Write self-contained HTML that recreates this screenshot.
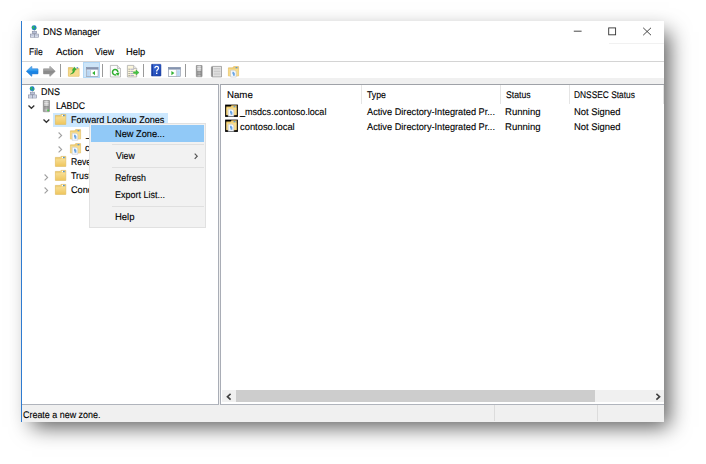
<!DOCTYPE html>
<html lang="en"><head><meta charset="utf-8"><title>DNS Manager</title>
<style>
html,body{margin:0;padding:0}
body{width:706px;height:464px;background:#fff;position:relative;overflow:hidden;font-family:"Liberation Sans",sans-serif;font-size:9.7px;color:#000;-webkit-text-stroke:.12px #000}
.a{position:absolute}
.t{position:absolute;white-space:pre;line-height:12px;height:12px;transform-origin:0 50%}
#win{position:absolute;left:21px;top:21px;width:643px;height:400.8px;background:#fff;box-shadow:8px 7.5px 20px -3px rgba(0,0,0,.65)}
svg{position:absolute;overflow:visible}
</style></head>
<body>
<div id="win"></div>
<!-- blue active-window edge -->
<div class="a" style="left:21px;top:21px;width:1.4px;height:400.8px;background:#2e7bd0"></div>
<!-- caption buttons -->
<svg style="left:570px;top:24px" width="90" height="16" viewBox="0 0 90 16">
 <path d="M3.8 7.2H11.6" stroke="#333" stroke-width="0.9" fill="none"/>
 <rect x="38.7" y="3.9" width="6.9" height="6.9" stroke="#333" stroke-width="0.9" fill="none"/>
 <path d="M73.2 3.8L81 11.2M81 3.8L73.2 11.2" stroke="#333" stroke-width="0.9" fill="none"/>
</svg>
<div class="a" style="left:609px;top:43.4px;width:55px;height:1px;background:#f1f1f1"></div>
<!-- toolbar -->
<div class="a" style="left:22px;top:61px;width:642px;height:1px;background:#d4d4d4"></div>
<div class="a" style="left:22px;top:78px;width:642px;height:6px;background:#f0f0f0"></div>
<!-- panes -->
<div class="a" style="left:22px;top:84px;width:197.2px;height:320.6px;background:#fff;border-top:1.1px solid #9fa2a8;border-right:1.2px solid #a9adb6;border-bottom:1.4px solid #b0b4bc;box-sizing:border-box"></div>
<div class="a" style="left:219.2px;top:84px;width:1.2px;height:320.6px;background:#f0f0f0"></div>
<div class="a" style="left:220.4px;top:84px;width:443.6px;height:320.6px;background:#fff;border-top:1.1px solid #9fa2a8;border-left:1.2px solid #a9adb6;border-bottom:1.4px solid #b0b4bc;box-sizing:border-box"></div>
<!-- tree selection -->
<div class="a" style="left:53px;top:113.3px;width:114.6px;height:13.4px;background:#cce8ff"></div>
<!-- list header separators -->
<div class="a" style="left:361px;top:85px;width:1px;height:18.5px;background:#e5e5e5"></div>
<div class="a" style="left:500px;top:85px;width:1px;height:18.5px;background:#e5e5e5"></div>
<div class="a" style="left:569px;top:85px;width:1px;height:18.5px;background:#e5e5e5"></div>
<div class="a" style="left:662.6px;top:85px;width:1px;height:18.5px;background:#e5e5e5"></div>
<!-- h scrollbar -->
<div class="a" style="left:221.6px;top:390.2px;width:442.4px;height:12.1px;background:#f0f0f0"></div>
<div class="a" style="left:235.8px;top:390.2px;width:359.6px;height:12.1px;background:#cdcdcd"></div>
<svg style="left:226px;top:392.5px" width="6" height="8" viewBox="0 0 6 8"><path d="M4.6 0.8L1.4 3.7L4.6 6.6" stroke="#404040" stroke-width="1.6" fill="none"/></svg>
<svg style="left:654.5px;top:392.5px" width="6" height="8" viewBox="0 0 6 8"><path d="M1.4 0.8L4.6 3.7L1.4 6.6" stroke="#404040" stroke-width="1.6" fill="none"/></svg>
<!-- status bar -->
<div class="a" style="left:22px;top:404.6px;width:642px;height:17.2px;background:#f0f0f0"></div>
<div class="a" style="left:494.3px;top:405px;width:1px;height:16px;background:#dcdcdc"></div>
<div class="a" style="left:597.3px;top:405px;width:1px;height:16px;background:#dcdcdc"></div>
<svg style="left:30.0px;top:25.1px;filter:blur(0.3px)" width="8.9" height="12.6" viewBox="0 0 8.9 12.6"><circle cx="4.1" cy="2.7" r="2.5" fill="#1f76d3"/><path d="M2.3 1.7Q3.4 0.4 4.7 0.7Q4 1.9 4.4 2.7Q3.2 3.3 3 4.7Q1.9 3.5 2.3 1.7Z" fill="#2fbf4f"/><path d="M5.4 2.3Q6.4 2.5 6.4 3.7Q5.6 4.9 4.8 5.1Q5.4 3.7 5.4 2.3Z" fill="#2fbf4f"/><path d="M4.45 5.3V6.3" stroke="#8a8fa3" stroke-width=".7"/><rect x="2.3" y="6.3" width="4.3" height="2.3" fill="#cfd6e6" stroke="#8a90a6" stroke-width=".7"/><rect x=".4" y="9.1" width="3.9" height="3.1" fill="#e4e9f4" stroke="#8a90a6" stroke-width=".7"/><rect x="4.6" y="9.1" width="3.9" height="3.1" fill="#e4e9f4" stroke="#8a90a6" stroke-width=".7"/><path d="M1.2 10.4H3.5M5.4 10.4H7.7M3 7.4H5.9" stroke="#9aa5c4" stroke-width=".6"/></svg>
<svg style="left:25.5px;top:65.8px;filter:blur(0.3px)" width="12.4" height="10.6" viewBox="0 0 12.4 10.6"><defs><linearGradient id="gb" x1="0" y1="0" x2="0" y2="1"><stop offset="0" stop-color="#6cc0f8"/><stop offset=".45" stop-color="#2b95ec"/><stop offset=".55" stop-color="#1582e4"/><stop offset="1" stop-color="#3a90e0"/></linearGradient></defs><path d="M0.3 5.3L5.4 0.4Q5.9 0.1 5.9 .7V2.7H11.6Q12.1 2.7 12.1 3.2V7.4Q12.1 7.9 11.6 7.9H5.9V9.9Q5.9 10.5 5.4 10.2Z" fill="url(#gb)" stroke="#2877cc" stroke-width=".5" stroke-linejoin="round"/></svg>
<svg style="left:43.0px;top:65.8px;filter:blur(0.3px)" width="12.6" height="10.6" viewBox="0 0 12.6 10.6"><defs><linearGradient id="gf" x1="0" y1="0" x2="0" y2="1"><stop offset="0" stop-color="#c2c2c2"/><stop offset=".45" stop-color="#979797"/><stop offset=".55" stop-color="#868686"/><stop offset="1" stop-color="#a4a4a4"/></linearGradient></defs><path d="M12.3 5.3L7.2 0.4Q6.7 0.1 6.7 .7V2.7H0.8Q0.3 2.7 0.3 3.2V7.4Q0.3 7.9 0.8 7.9H6.7V9.9Q6.7 10.5 7.2 10.2Z" fill="url(#gf)" stroke="#878787" stroke-width=".5" stroke-linejoin="round"/></svg>
<div class="a" style="left:60.1px;top:64.2px;width:1px;height:13.2px;background:#9a9a9a"></div>
<svg style="left:67.8px;top:66.0px;filter:blur(0.3px)" width="11.5" height="10.6" viewBox="0 0 11.5 10.6"><path d="M0.4 1.6H4.6L5.6 2.4H11.1V10.2H0.4Z" fill="#f0cf74" stroke="#d9b154" stroke-width=".6"/><path d="M0.7 3.6H10.8V9.9H0.7Z" fill="#f6dc8e"/><path d="M2.4 8.2Q4.8 7.4 5.4 4.2L4.1 4.4L6.3 0.9L8.3 3.8L7 4Q6.4 7.8 2.4 8.2Z" fill="#35b535" stroke="#2a962a" stroke-width=".4"/><rect x="8.6" y="1.2" width="1.5" height="1.3" fill="#4a90d0"/></svg>
<div class="a" style="left:82.8px;top:62.3px;width:17.5px;height:16.2px;background:#cde5f8;border:1px solid #b2d7f6;box-sizing:border-box"></div>
<svg style="left:85.9px;top:66.7px;filter:blur(0.3px)" width="12.4" height="9.8" viewBox="0 0 12.4 9.8"><rect x=".3" y=".3" width="11.8" height="9.2" fill="#fff" stroke="#7f8ba0" stroke-width=".6"/><rect x=".3" y=".3" width="11.8" height="2.3" fill="#8594b0"/><rect x=".9" y="3.2" width="3" height="5.8" fill="#b9d6f3"/><path d="M4.5 2.8V9.4" stroke="#8e9ab0" stroke-width=".5"/><path d="M6.2 6.1L9 3.9V8.3Z" fill="#33b233"/></svg>
<div class="a" style="left:101.9px;top:64.2px;width:1px;height:13.2px;background:#9a9a9a"></div>
<svg style="left:110.2px;top:64.5px;filter:blur(0.3px)" width="10.9" height="12.4" viewBox="0 0 10.9 12.4"><path d="M.4 .4H7.4L10.5 3.5V12H.4Z" fill="#fdfdfd" stroke="#a6a6a6" stroke-width=".7"/><path d="M7.4 .4V3.5H10.5" fill="#e8e8e8" stroke="#a6a6a6" stroke-width=".6"/><path d="M7.9 7.2A2.7 2.7 0 1 0 6.4 9.6" fill="none" stroke="#2fae2f" stroke-width="1.5"/><path d="M5.6 8.2L9.6 7.6L8.2 11Z" fill="#2fae2f"/></svg>
<svg style="left:126.6px;top:64.5px;filter:blur(0.3px)" width="12.4" height="12.4" viewBox="0 0 12.4 12.4"><path d="M.4 .4H6.6L9.7 3.5V12H.4Z" fill="#fbf6dc" stroke="#a6a6a6" stroke-width=".7"/><path d="M6.6 .4V3.5H9.7" fill="#e8e8e8" stroke="#a6a6a6" stroke-width=".6"/><path d="M1.6 4.2H2.6M1.6 6.4H2.6M1.6 8.6H2.6M1.6 10.6H2.6" stroke="#555" stroke-width=".8"/><path d="M3.4 4.2H7M3.4 6.4H6M3.4 8.6H6M3.4 10.6H7" stroke="#8a8ac0" stroke-width=".7"/><path d="M6.4 6.7H9V5.1L12.1 7.6L9 10.1V8.5H6.4Z" fill="#45c445" stroke="#2fa02f" stroke-width=".4"/></svg>
<div class="a" style="left:143.2px;top:64.2px;width:1px;height:13.2px;background:#9a9a9a"></div>
<svg style="left:151.2px;top:64.4px;filter:blur(0.3px)" width="10.3" height="12.4" viewBox="0 0 10.3 12.4"><defs><linearGradient id="gh" x1="0" y1="0" x2="1" y2="1"><stop offset="0" stop-color="#3b6fe0"/><stop offset="1" stop-color="#1a3fa8"/></linearGradient></defs><rect x=".3" y=".3" width="9.7" height="11.8" rx=".6" fill="url(#gh)" stroke="#20409a" stroke-width=".5"/><path d="M1.4 .4V12" stroke="#16308a" stroke-width=".8"/><path d="M3.9 4.2Q3.9 2.4 5.7 2.4Q7.5 2.4 7.5 4Q7.5 5.1 6.5 5.8Q5.7 6.4 5.7 7.6" fill="none" stroke="#fff" stroke-width="1.3"/><rect x="5" y="8.6" width="1.4" height="1.4" fill="#fff"/></svg>
<svg style="left:168.0px;top:66.5px;filter:blur(0.3px)" width="12.8" height="9.9" viewBox="0 0 12.8 9.9"><rect x=".3" y=".3" width="12.2" height="9.3" fill="#fff" stroke="#7f8ba0" stroke-width=".6"/><rect x=".3" y=".3" width="12.2" height="2.3" fill="#8594b0"/><rect x="9" y="3.2" width="2.9" height="5.8" fill="#b9d6f3"/><path d="M8.4 2.8V9.4" stroke="#8e9ab0" stroke-width=".5"/><path d="M6.4 6.1L3.4 3.9V8.3Z" fill="#33b233"/></svg>
<div class="a" style="left:185.1px;top:64.2px;width:1px;height:13.2px;background:#9a9a9a"></div>
<svg style="left:195.7px;top:64.7px;filter:blur(0.3px)" width="6.4" height="12.1" viewBox="0 0 6.4 12.1"><defs><linearGradient id="gs2" x1="0" y1="0" x2="1" y2="0"><stop offset="0" stop-color="#8e8e8e"/><stop offset=".5" stop-color="#c8c8c8"/><stop offset="1" stop-color="#8a8a8a"/></linearGradient></defs><rect x=".3" y=".3" width="5.8" height="11.5" rx=".5" fill="url(#gs2)" stroke="#777" stroke-width=".5"/><path d="M1.2 1.8H5.2M1.2 3.4H5.2M1.2 5H5.2" stroke="#f2f2f2" stroke-width=".8"/><path d="M1.2 6.6H5.2M1.2 8H5.2M1.2 9.6H5.2" stroke="#6e6e6e" stroke-width=".5"/></svg>
<svg style="left:210.9px;top:65.5px;filter:blur(0.3px)" width="10.9" height="11.3" viewBox="0 0 10.9 11.3"><path d="M1.6 .4H10.5V10.9H1.6Q.4 10.9 .4 9.6V1.6Q.4 .4 1.6 .4Z" fill="#eaeaea" stroke="#8a8a8a" stroke-width=".7"/><path d="M1.2 .8V10.6" stroke="#6a6a6a" stroke-width="1"/><path d="M2.6 2.4H9.6M2.6 4H9.6M2.6 5.6H9.6M2.6 7.2H9.6M2.6 8.8H9.6" stroke="#b4b4b4" stroke-width=".6"/></svg>
<svg style="left:228.0px;top:65.5px;filter:blur(0.3px)" width="11.0" height="11.4" viewBox="0 0 11 11.4"><path d="M.4 1.8H4.6L5.6 .6H10.6V10H.4Z" fill="#f0cf74" stroke="#d9b154" stroke-width=".5"/><path d="M.6 2.8H10.4V9.8H.6Z" fill="#f7dc8c"/><rect x="7.6" y="1" width="1.8" height="1.3" fill="#5a9ad8"/><path d="M2.6 4.2H6.6L8.2 5.8V11.1H2.6Z" fill="#f6f9fd" stroke="#b8bcc6" stroke-width=".5"/><path d="M4.4 5.8H5.6L6.8 7.2V9.8H5V8.2H4.4Z" fill="#6aa6e6"/></svg>
<svg style="left:27.6px;top:86.3px;filter:blur(0.3px)" width="8.9" height="12.4" viewBox="0 0 8.9 12.6"><circle cx="4.1" cy="2.7" r="2.5" fill="#1f76d3"/><path d="M2.3 1.7Q3.4 0.4 4.7 0.7Q4 1.9 4.4 2.7Q3.2 3.3 3 4.7Q1.9 3.5 2.3 1.7Z" fill="#2fbf4f"/><path d="M5.4 2.3Q6.4 2.5 6.4 3.7Q5.6 4.9 4.8 5.1Q5.4 3.7 5.4 2.3Z" fill="#2fbf4f"/><path d="M4.45 5.3V6.3" stroke="#8a8fa3" stroke-width=".7"/><rect x="2.3" y="6.3" width="4.3" height="2.3" fill="#cfd6e6" stroke="#8a90a6" stroke-width=".7"/><rect x=".4" y="9.1" width="3.9" height="3.1" fill="#e4e9f4" stroke="#8a90a6" stroke-width=".7"/><rect x="4.6" y="9.1" width="3.9" height="3.1" fill="#e4e9f4" stroke="#8a90a6" stroke-width=".7"/><path d="M1.2 10.4H3.5M5.4 10.4H7.7M3 7.4H5.9" stroke="#9aa5c4" stroke-width=".6"/></svg>
<svg style="left:28.0px;top:104.9px;filter:blur(0.25px)" width="6.8" height="4.0" viewBox="0 0 6.8 4"><path d="M.5 .5L3.4 3.3L6.3 .5" fill="none" stroke="#303030" stroke-width="1.3"/></svg>
<svg style="left:43.0px;top:100.3px;filter:blur(0.3px)" width="6.8" height="12.1" viewBox="0 0 6.8 12.1"><defs><linearGradient id="gs" x1="0" y1="0" x2="1" y2="0"><stop offset="0" stop-color="#8e8e8e"/><stop offset=".5" stop-color="#c4c4c4"/><stop offset="1" stop-color="#8a8a8a"/></linearGradient></defs><rect x=".3" y=".3" width="6.2" height="11.5" rx=".5" fill="url(#gs)" stroke="#777" stroke-width=".5"/><path d="M1.2 1.8H5.6M1.2 3.4H5.6M1.2 5H5.6" stroke="#f2f2f2" stroke-width=".8"/><path d="M1.2 6.6H5.6M1.2 8H5.6" stroke="#6e6e6e" stroke-width=".5"/><rect x="4.3" y="9.6" width="1.6" height="1.6" fill="#3fd23f"/></svg>
<svg style="left:42.6px;top:119.1px;filter:blur(0.25px)" width="6.8" height="4.0" viewBox="0 0 6.8 4"><path d="M.5 .5L3.4 3.3L6.3 .5" fill="none" stroke="#303030" stroke-width="1.3"/></svg>
<svg style="left:54.8px;top:114.2px;filter:blur(0.3px)" width="11.2" height="10.8" viewBox="0 0 11.2 10.8"><defs><linearGradient id="gfo" x1="0" y1="0" x2="0" y2="1"><stop offset="0" stop-color="#f8e098"/><stop offset="1" stop-color="#efc65e"/></linearGradient></defs><path d="M.4 1.4H5L6 .4H10.8V10.4H.4Z" fill="#f0cf74" stroke="#d9b154" stroke-width=".6"/><path d="M.7 3.2H5.4L6.4 2.4H10.5V10.1H.7Z" fill="url(#gfo)"/><rect x="6.9" y=".9" width="1.4" height="1.2" fill="#fff"/><rect x="8.1" y=".9" width="1.5" height="1.3" fill="#3f8fdc"/></svg>
<svg style="left:58.4px;top:131.6px;filter:blur(0.25px)" width="4.2" height="6.8" viewBox="0 0 4.2 6.8"><path d="M.6 .5L3.6 3.4L.6 6.3" fill="none" stroke="#a0a0a0" stroke-width="1.15"/></svg>
<svg style="left:69.5px;top:128.7px;filter:blur(0.3px)" width="11.0" height="11.6" viewBox="0 0 11 11.6"><path d="M.4 1.8H4.6L5.6 .6H10.6V10H.4Z" fill="#f0cf74" stroke="#d9b154" stroke-width=".5"/><path d="M.6 2.8H10.4V9.8H.6Z" fill="#f7dc8c"/><rect x="7.6" y="1" width="1.8" height="1.3" fill="#5a9ad8"/><path d="M2.2 4.2H6.2L7.8 5.8V11.3H2.2Z" fill="#f6f9fd" stroke="#b8bcc6" stroke-width=".5"/><path d="M4 5.8H5.2L6.4 7.2V9.8H4.6V8.2H4Z" fill="#6aa6e6"/></svg>
<svg style="left:58.4px;top:145.6px;filter:blur(0.25px)" width="4.2" height="6.8" viewBox="0 0 4.2 6.8"><path d="M.6 .5L3.6 3.4L.6 6.3" fill="none" stroke="#a0a0a0" stroke-width="1.15"/></svg>
<svg style="left:69.5px;top:142.6px;filter:blur(0.3px)" width="11.0" height="11.6" viewBox="0 0 11 11.6"><path d="M.4 1.8H4.6L5.6 .6H10.6V10H.4Z" fill="#f0cf74" stroke="#d9b154" stroke-width=".5"/><path d="M.6 2.8H10.4V9.8H.6Z" fill="#f7dc8c"/><rect x="7.6" y="1" width="1.8" height="1.3" fill="#5a9ad8"/><path d="M2.2 4.2H6.2L7.8 5.8V11.3H2.2Z" fill="#f6f9fd" stroke="#b8bcc6" stroke-width=".5"/><path d="M4 5.8H5.2L6.4 7.2V9.8H4.6V8.2H4Z" fill="#6aa6e6"/></svg>
<svg style="left:54.8px;top:156.1px;filter:blur(0.3px)" width="11.2" height="10.8" viewBox="0 0 11.2 10.8"><defs><linearGradient id="gfo" x1="0" y1="0" x2="0" y2="1"><stop offset="0" stop-color="#f8e098"/><stop offset="1" stop-color="#efc65e"/></linearGradient></defs><path d="M.4 1.4H5L6 .4H10.8V10.4H.4Z" fill="#f0cf74" stroke="#d9b154" stroke-width=".6"/><path d="M.7 3.2H5.4L6.4 2.4H10.5V10.1H.7Z" fill="url(#gfo)"/><rect x="6.9" y=".9" width="1.4" height="1.2" fill="#fff"/><rect x="8.1" y=".9" width="1.5" height="1.3" fill="#3f8fdc"/></svg>
<svg style="left:44.3px;top:173.5px;filter:blur(0.25px)" width="4.2" height="6.8" viewBox="0 0 4.2 6.8"><path d="M.6 .5L3.6 3.4L.6 6.3" fill="none" stroke="#a0a0a0" stroke-width="1.15"/></svg>
<svg style="left:54.8px;top:170.0px;filter:blur(0.3px)" width="11.2" height="10.8" viewBox="0 0 11.2 10.8"><defs><linearGradient id="gfo" x1="0" y1="0" x2="0" y2="1"><stop offset="0" stop-color="#f8e098"/><stop offset="1" stop-color="#efc65e"/></linearGradient></defs><path d="M.4 1.4H5L6 .4H10.8V10.4H.4Z" fill="#f0cf74" stroke="#d9b154" stroke-width=".6"/><path d="M.7 3.2H5.4L6.4 2.4H10.5V10.1H.7Z" fill="url(#gfo)"/><rect x="6.9" y=".9" width="1.4" height="1.2" fill="#fff"/><rect x="8.1" y=".9" width="1.5" height="1.3" fill="#3f8fdc"/></svg>
<svg style="left:44.3px;top:187.4px;filter:blur(0.25px)" width="4.2" height="6.8" viewBox="0 0 4.2 6.8"><path d="M.6 .5L3.6 3.4L.6 6.3" fill="none" stroke="#a0a0a0" stroke-width="1.15"/></svg>
<svg style="left:54.8px;top:183.9px;filter:blur(0.3px)" width="11.2" height="10.8" viewBox="0 0 11.2 10.8"><defs><linearGradient id="gfo" x1="0" y1="0" x2="0" y2="1"><stop offset="0" stop-color="#f8e098"/><stop offset="1" stop-color="#efc65e"/></linearGradient></defs><path d="M.4 1.4H5L6 .4H10.8V10.4H.4Z" fill="#f0cf74" stroke="#d9b154" stroke-width=".6"/><path d="M.7 3.2H5.4L6.4 2.4H10.5V10.1H.7Z" fill="url(#gfo)"/><rect x="6.9" y=".9" width="1.4" height="1.2" fill="#fff"/><rect x="8.1" y=".9" width="1.5" height="1.3" fill="#3f8fdc"/></svg>
<svg style="left:226.2px;top:105.2px;filter:blur(0.3px)" width="11.0" height="11.6" viewBox="0 0 11 11.6"><rect x="-.9" y="-.4" width="12.8" height="12.3" fill="#000"/><path d="M.4 1.8H4.6L5.6 .6H10.6V10H.4Z" fill="#f0cf74" stroke="#d9b154" stroke-width=".5"/><path d="M.6 2.8H10.4V9.8H.6Z" fill="#f7dc8c"/><rect x="7.6" y="1" width="1.8" height="1.3" fill="#5a9ad8"/><path d="M2.2 4.2H6.2L7.8 5.8V11.3H2.2Z" fill="#f6f9fd" stroke="#b8bcc6" stroke-width=".5"/><path d="M4 5.8H5.2L6.4 7.2V9.8H4.6V8.2H4Z" fill="#6aa6e6"/></svg>
<svg style="left:226.2px;top:119.7px;filter:blur(0.3px)" width="11.0" height="11.6" viewBox="0 0 11 11.6"><rect x="-.9" y="-.4" width="12.8" height="12.3" fill="#000"/><path d="M.4 1.8H4.6L5.6 .6H10.6V10H.4Z" fill="#f0cf74" stroke="#d9b154" stroke-width=".5"/><path d="M.6 2.8H10.4V9.8H.6Z" fill="#f7dc8c"/><rect x="7.6" y="1" width="1.8" height="1.3" fill="#5a9ad8"/><path d="M2.2 4.2H6.2L7.8 5.8V11.3H2.2Z" fill="#f6f9fd" stroke="#b8bcc6" stroke-width=".5"/><path d="M4 5.8H5.2L6.4 7.2V9.8H4.6V8.2H4Z" fill="#6aa6e6"/></svg>
<span class="t" style="left:43.1px;top:26.24px;transform:rotate(.03deg) scaleX(0.9339)">DNS Manager</span>
<span class="t" style="left:29.2px;top:45.94px;transform:rotate(.03deg) scaleX(0.8746)">File</span>
<span class="t" style="left:55.7px;top:45.94px;transform:rotate(.03deg) scaleX(1.0113)">Action</span>
<span class="t" style="left:95.0px;top:45.94px;transform:rotate(.03deg) scaleX(0.9143)">View</span>
<span class="t" style="left:126.4px;top:45.94px;transform:rotate(.03deg) scaleX(0.9684)">Help</span>
<span class="t" style="left:41.1px;top:86.04px;transform:rotate(.03deg) scaleX(0.9231)">DNS</span>
<span class="t" style="left:55.9px;top:99.99px;transform:rotate(.03deg) scaleX(0.8960)">LABDC</span>
<span class="t" style="left:70.7px;top:113.94px;transform:rotate(.03deg) scaleX(0.9377)">Forward Lookup Zones</span>
<span class="t" style="left:85.8px;top:127.84px;transform:rotate(.03deg) scaleX(0.9308)">_msdcs.contoso.local</span>
<span class="t" style="left:85.4px;top:141.84px;transform:rotate(.03deg) scaleX(0.9632)">contoso.local</span>
<span class="t" style="left:70.7px;top:155.74px;transform:rotate(.03deg) scaleX(0.8850)">Reverse Lookup Zones</span>
<span class="t" style="left:71.4px;top:169.64px;transform:rotate(.03deg) scaleX(0.9150)">Trust Points</span>
<span class="t" style="left:71.2px;top:183.64px;transform:rotate(.03deg) scaleX(0.9470)">Conditional Forwarders</span>
<span class="t" style="left:226.6px;top:88.84px;transform:rotate(.03deg) scaleX(0.9980)">Name</span>
<span class="t" style="left:366.9px;top:88.84px;transform:rotate(.03deg) scaleX(0.9012)">Type</span>
<span class="t" style="left:505.5px;top:88.84px;transform:rotate(.03deg) scaleX(0.8963)">Status</span>
<span class="t" style="left:574.4px;top:88.84px;transform:rotate(.03deg) scaleX(0.8633)">DNSSEC Status</span>
<span class="t" style="left:240.3px;top:106.14px;transform:rotate(.03deg) scaleX(0.9330)">_msdcs.contoso.local</span>
<span class="t" style="left:239.9px;top:120.64px;transform:rotate(.03deg) scaleX(0.9668)">contoso.local</span>
<span class="t" style="left:366.6px;top:106.14px;transform:rotate(.03deg) scaleX(0.9507)">Active Directory-Integrated Pr...</span>
<span class="t" style="left:366.6px;top:120.64px;transform:rotate(.03deg) scaleX(0.9507)">Active Directory-Integrated Pr...</span>
<span class="t" style="left:505.0px;top:106.14px;transform:rotate(.03deg) scaleX(0.9842)">Running</span>
<span class="t" style="left:505.0px;top:120.64px;transform:rotate(.03deg) scaleX(0.9842)">Running</span>
<span class="t" style="left:574.3px;top:106.14px;transform:rotate(.03deg) scaleX(0.9711)">Not Signed</span>
<span class="t" style="left:574.3px;top:120.64px;transform:rotate(.03deg) scaleX(0.9711)">Not Signed</span>
<span class="t" style="left:22.9px;top:408.74px;transform:rotate(.03deg) scaleX(0.9217)">Create a new zone.</span>
<!-- context menu -->
<div class="a" style="left:88.6px;top:123.2px;width:117.8px;height:104.6px;background:#f2f2f2;border:1.4px solid #e1e1e1;box-sizing:border-box"></div>
<div class="a" style="left:90.8px;top:125.2px;width:113.4px;height:16.6px;background:#91c9f7"></div>
<div class="a" style="left:112.3px;top:144.3px;width:91.5px;height:1.2px;background:#e0e0e0"></div>
<div class="a" style="left:112.3px;top:166.9px;width:91.5px;height:1.2px;background:#e0e0e0"></div>
<div class="a" style="left:112.3px;top:205.9px;width:91.5px;height:1.2px;background:#e0e0e0"></div>
<svg style="left:193.6px;top:152.6px;filter:blur(.3px)" width="4" height="7" viewBox="0 0 4 7"><path d="M.7 0.6L3.2 3.2L.7 5.8" stroke="#555" stroke-width="1.2" fill="none"/></svg>
<span class="t" style="left:115.0px;top:127.64px;transform:rotate(.03deg) scaleX(0.9517)">New Zone...</span>
<span class="t" style="left:115.7px;top:149.84px;transform:rotate(.03deg) scaleX(0.9000)">View</span>
<span class="t" style="left:115.0px;top:172.04px;transform:rotate(.03deg) scaleX(0.9099)">Refresh</span>
<span class="t" style="left:115.0px;top:189.34px;transform:rotate(.03deg) scaleX(0.9282)">Export List...</span>
<span class="t" style="left:115.0px;top:211.34px;transform:rotate(.03deg) scaleX(0.9789)">Help</span>
</body></html>
